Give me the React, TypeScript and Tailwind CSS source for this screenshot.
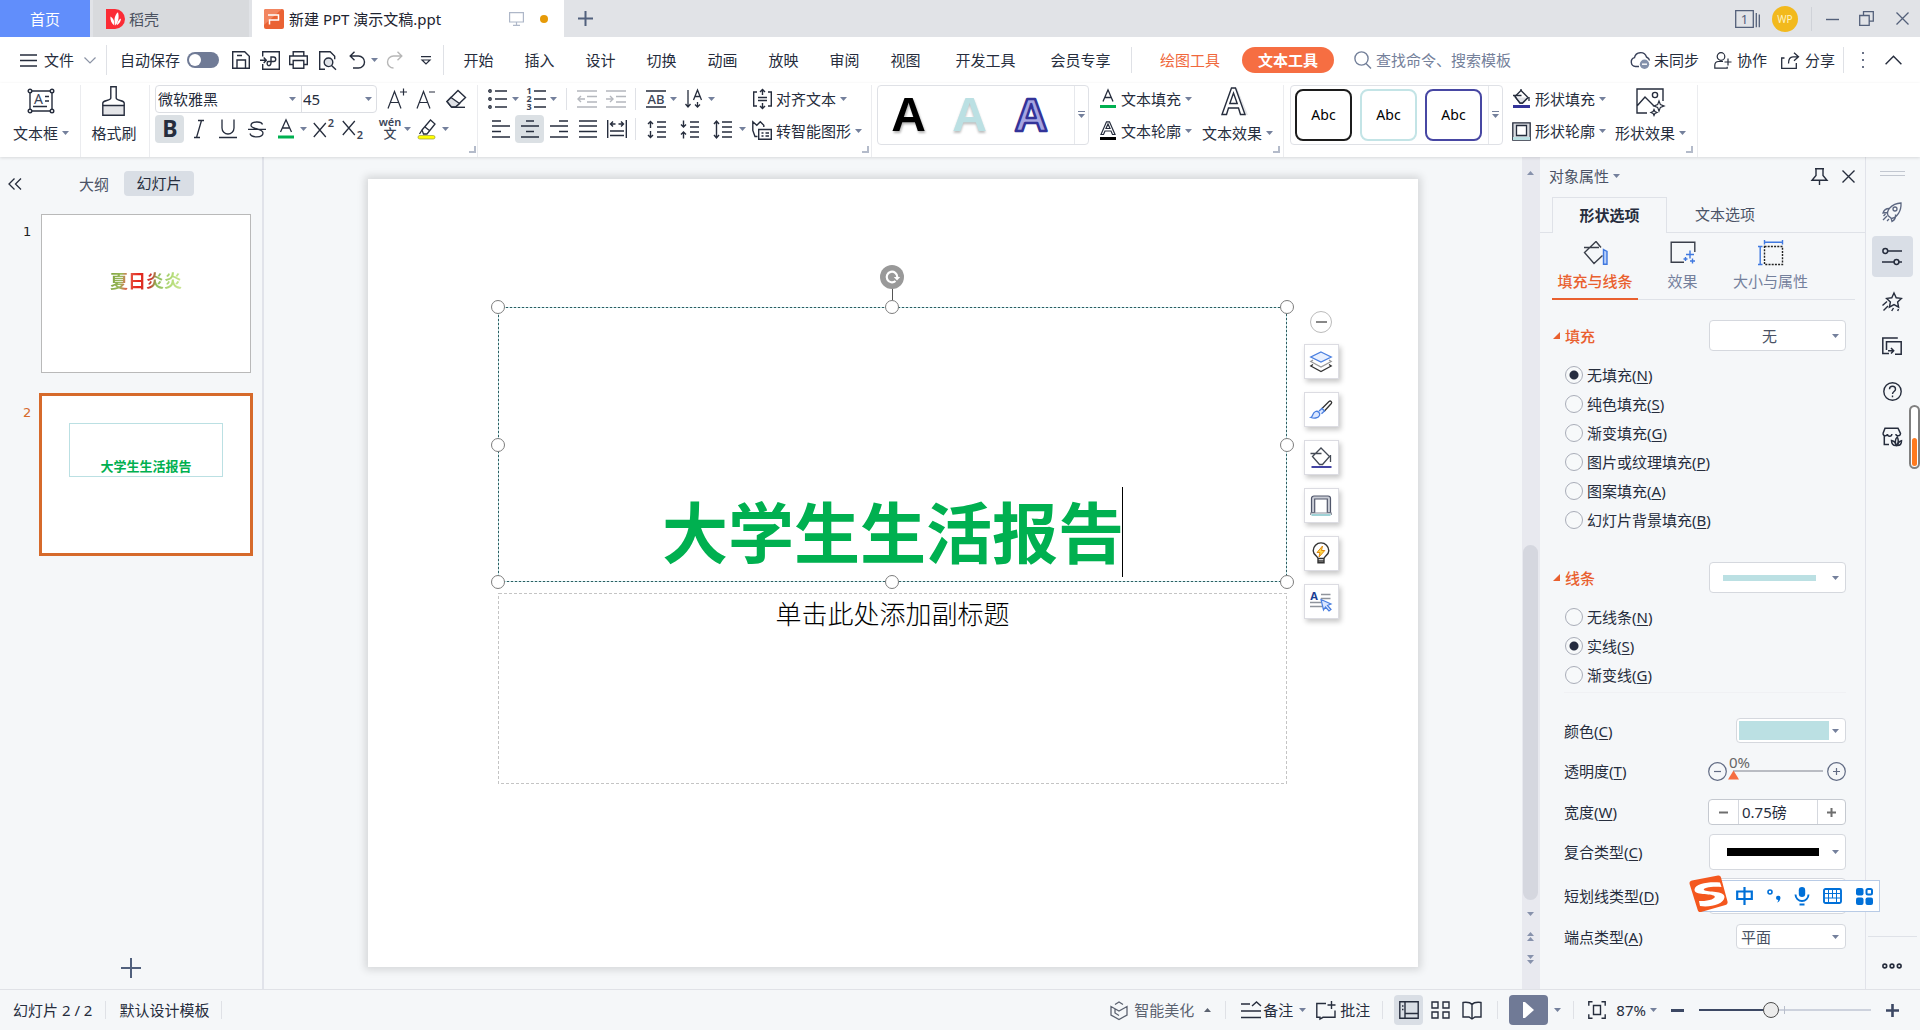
import { useState, type ReactNode } from "react";

const RED = "#e9602f";

function Svg({
  w,
  h,
  sw = 1.4,
  className = "",
  children,
}: {
  w: number;
  h: number;
  sw?: number;
  className?: string;
  children: ReactNode;
}) {
  return (
    <svg
      width={w}
      height={h}
      viewBox={`0 0 ${w} ${h}`}
      fill="none"
      stroke="currentColor"
      strokeWidth={sw}
      className={`shrink-0 overflow-visible ${className}`}
      aria-hidden="true"
    >
      {children}
    </svg>
  );
}

function Caret({ className = "text-[#74809c]" }: { className?: string }) {
  return (
    <svg width="7" height="4" viewBox="0 0 7 4" className={`shrink-0 ${className}`} aria-hidden="true">
      <path d="M0 0h7L3.5 4z" fill="currentColor" />
    </svg>
  );
}

// letter glyph used by the character formatting buttons
function Letter({ x, y, size, weight = 400, fill = "#3b4456", children }: { x: number; y: number; size: number; weight?: number; fill?: string; children: string }) {
  return (
    <text x={x} y={y} fontSize={size} fontWeight={weight} fill={fill} stroke="none" textAnchor="middle" fontFamily="'Noto Sans', 'Noto Sans CJK SC', sans-serif">
      {children}
    </text>
  );
}

function Sep({ className = "h-7" }: { className?: string }) {
  return <div className={`w-px shrink-0 bg-[#dfe1e6] ${className}`} />;
}

function IconBtn({ label, active, caret, wide, children }: { label: string; active?: boolean; caret?: boolean; wide?: boolean; children: ReactNode }) {
  return (
    <button
      aria-label={label}
      className={`flex h-7 shrink-0 items-center ${caret ? (wide ? "w-[42px]" : "w-[38px]") : wide ? "w-[33px]" : "w-[29px]"}`}
    >
      <span className={`flex h-7 items-center justify-center rounded-sm ${wide ? "w-[33px]" : "w-[29px]"} ${active ? "bg-[#dbe0e4]" : ""}`}>
        {children}
      </span>
      {caret && <Caret />}
    </button>
  );
}

function LabelBtn({ icon, text, iconWidth = "w-[18px]" }: { icon: ReactNode; text: string; iconWidth?: string }) {
  return (
    <button className="flex h-7 items-center gap-1 whitespace-nowrap">
      <span className={`flex justify-center ${iconWidth}`}>{icon}</span>
      <span>{text}</span>
      <Caret />
    </button>
  );
}

function BigBtn({ icon, text, caret }: { icon: ReactNode; text: string; caret?: boolean }) {
  return (
    <button className="flex flex-col items-center gap-1 whitespace-nowrap">
      <span className="flex h-8 items-center">{icon}</span>
      <span className="flex items-center gap-1 leading-6">
        {text}
        {caret && <Caret />}
      </span>
    </button>
  );
}

function Corner() {
  return (
    <Svg w={7} h={7} sw={2} className="mt-auto mr-[6px] mb-1 ml-auto text-[#b4bbca]">
      <path d="M6 0v6H0" />
    </Svg>
  );
}

function TitleBar() {
  return (
    <header className="flex h-[37px] shrink-0 bg-[#e1e3e7]">
      <button className="w-[90px] bg-[#618efb] text-white">首页</button>
      <button className="ml-[3px] flex w-[156px] items-center gap-1 bg-[#d8dadd] pl-[13px] text-[#4b5260]">
        <svg width="19" height="20" viewBox="0 0 19 20" aria-hidden="true">
          <path d="M0 0h9a10 10 0 0 1 0 20H0z" fill="#fb2b35" />
          <path d="M9.4 16.5C7.6 11 8.6 6 12 3.3c1.3 4.800.4 9.900-2.600 13.200z" fill="#fff" />
          <path d="M8.300 16.400C5.600 14.700 4.100 11.300 4.400 7.600c3 1.600 4.400 5 3.900 8.800zM10.800 16.300c2.500-1.200 4-3.500 4.200-6.700-2.400 1.200-3.900 3.600-4.200 6.700z" fill="#fff" />
        </svg>
        稻壳
      </button>
      <div className="ml-[3px] flex w-[312px] items-center bg-white pl-3 text-[#1d2330]">
        <svg width="20" height="20" viewBox="0 0 20 20" aria-hidden="true">
          <rect width="20" height="20" rx="2" fill="#ea6234" />
          <path d="M0 2a2 2 0 0 1 2-2h16L0 16z" fill="#f28560" />
          <path d="M4 6h10.500v5H5.500v4.500" fill="none" stroke="#fff" strokeWidth="1.500" />
        </svg>
        <span className="ml-[5px]">新建 PPT 演示文稿.ppt</span>
        <Svg w={15} h={14} sw={1.2} className="ml-auto text-[#aeb7c8]">
          <path d="M.6.6h13.800v9.400H.6zM7.500 10v3M4 13.300h7" />
        </Svg>
        <span className="mr-4 ml-4 size-2 rounded-full bg-[#e69a08]" />
      </div>
      <button aria-label="新建标签" className="ml-[14px] text-[#51607d]">
        <Svg w={15} h={15} sw={2}>
          <path d="M7.500 0v15M0 7.500h15" />
        </Svg>
      </button>
      <div className="ml-auto flex items-center pr-[11px] text-[#53607a]">
        <Svg w={25} h={18} sw={1.300}>
          <path d="M.7.7h17.600v16.600H.7zM21.300 3v14.300M24.300 4.500v12.800" />
          <Letter x={9.500} y={14} size={13} fill="#53607a">1</Letter>
        </Svg>
        <span className="ml-3 flex size-[26px] items-center justify-center rounded-full bg-[#f2b91d] text-[10px] text-[#fff3c4]">WP</span>
        <Sep className="ml-[13px] h-6 !bg-[#cfd2d8]" />
        <button aria-label="最小化" className="ml-[14px]">
          <Svg w={13} h={14}><path d="M0 7.500h13" /></Svg>
        </button>
        <button aria-label="还原" className="ml-5">
          <Svg w={15} h={15} sw={1.300}><path d="M.7 4.500h9.500v9.800H.7zM4.500 4.500V.7h9.800v9.500h-4" /></Svg>
        </button>
        <button aria-label="关闭" className="ml-[22px]">
          <Svg w={13} h={13} sw={1.300}><path d="M.5.5l12 12M12.500.5l-12 12" /></Svg>
        </button>
      </div>
    </header>
  );
}

const TABS = ["开始", "插入", "设计", "切换", "动画", "放映", "审阅", "视图"];

function MenuBar() {
  const [autoSave, setAutoSave] = useState(false);
  return (
    <nav className="flex h-[46px] shrink-0 items-center bg-white whitespace-nowrap">
      <button className="ml-5 flex items-center">
        <Svg w={17} h={13} sw={1.300}><path d="M0 1h17M0 6.500h17M0 12h17" /></Svg>
        <span className="ml-[7px]">文件</span>
        <Svg w={12} h={7} sw={1.200} className="ml-[10px] text-[#8b93a5]"><path d="M.5.5L6 6l5.500-5.500" /></Svg>
      </button>
      <Sep className="ml-[10px] h-[30px]" />
      <label className="ml-[13px] flex items-center gap-[7px]">
        自动保存
        <input type="checkbox" role="switch" className="peer sr-only" checked={autoSave} onChange={(e) => setAutoSave(e.target.checked)} />
        <span className="flex h-4 w-8 items-center rounded-full bg-[#707b96] px-0.5 peer-checked:justify-end">
          <span className="size-3 rounded-full bg-white" />
        </span>
      </label>
      <div className="ml-[7px] flex">
        <IconBtn label="保存">
          <Svg w={18} h={18}><path d="M.7.7h12l4.600 4.600v12H.7zM5 17v-8h8.500v8M5 4.500h5" /></Svg>
        </IconBtn>
        <IconBtn label="输出为PDF">
          <Svg w={20} h={19}><path d="M2.700 5.500V.7h16.600v17.600H2.700V13M0 9.200h6M3.700 6.500l2.600 2.700-2.600 2.700M8 14.500c2 .6 3-1 3-3V6h2.500c3 0 3 4.500 0 4.500H8.500c-2 0-1.500 3-.5 4" /></Svg>
        </IconBtn>
        <IconBtn label="打印">
          <Svg w={19} h={18}><path d="M4.200 5V.7h10.600V5M4 13.500H.7V5h17.600v8.500H15M4.200 9.500h10.600v7.800H4.200z" /></Svg>
        </IconBtn>
        <IconBtn label="打印预览">
          <Svg w={17} h={19}><path d="M6 18.200H.7V.7h10.500l4.500 4.500v3M12.500 14.500l4.500 4.200" /><circle cx="9.500" cy="11.300" r="4.300" fill="#e1e4e9" /></Svg>
        </IconBtn>
        <IconBtn label="撤销" caret>
          <Svg w={16} h={18}><path d="M5.500.8L1.200 5l4.300 4.200M1.200 5h8.300a5.700 5.700 0 0 1 0 12H4" /></Svg>
        </IconBtn>
        <IconBtn label="恢复">
          <Svg w={16} h={18} className="text-[#b7b7b7]"><path d="M10.500.8L14.800 5l-4.300 4.200M14.800 5H6.500a5.700 5.700 0 0 0 0 12" /></Svg>
        </IconBtn>
        <button aria-label="更多" className="ml-[12px] self-center">
          <Svg w={10} h={9} sw={1.200}><path d="M0 .7h10M1 4h8L5 8z" /></Svg>
        </button>
      </div>
      <Sep className="ml-3 h-[30px]" />
      <div className="ml-1 flex">
        {TABS.map((t) => (
          <button key={t} className="w-[61px] text-center">{t}</button>
        ))}
        <button className="ml-[19px] w-[61px]">开发工具</button>
        <button className="ml-[34px] w-[61px]">会员专享</button>
      </div>
      <Sep className="ml-5 h-[26px]" />
      <button className="ml-[28px] text-[#f0683c]">绘图工具</button>
      <button className="ml-[22px] h-[26px] w-[92px] rounded-full bg-[#f66e42] font-bold text-white">文本工具</button>
      <label className="ml-5 flex min-w-0 items-center gap-1 text-[#74809a]">
        <Svg w={18} h={18}><circle cx="7.500" cy="7.500" r="6.600" /><path d="M12 12.500l5 5" /></Svg>
        <input aria-label="查找命令" placeholder="查找命令、搜索模板" className="w-40 outline-none placeholder:text-[#74809a]" />
      </label>
      <div className="ml-auto flex items-center pr-[18px]">
        <button className="flex items-center gap-[3px]">
          <Svg w={21} h={18} className="text-[#39415a]">
            <path d="M9 15.500H5.500a4.500 4.500 0 0 1-1-8.800A6.200 6.200 0 0 1 16.500 6c1.700.7 2.800 2 3 3.500" />
            <circle cx="14.500" cy="13.200" r="4.700" fill="#8390aa" stroke="none" />
            <path d="M12 13.200h5" stroke="#fff" />
          </Svg>
          未同步
        </button>
        <button className="ml-[15px] flex items-center gap-[5px]">
          <Svg w={18} h={17} sw={1.200}><circle cx="7" cy="4.500" r="3.800" /><path d="M9 9.500H4.500A3.800 3.800 0 0 0 .8 13v3.200h12.400v-1.500M14 6.500v7M10.500 10h7" /></Svg>
          协作
        </button>
        <button className="ml-[14px] flex items-center gap-[5px]">
          <Svg w={19} h={17} sw={1.300}><path d="M3.500 6H.7v10.300h14.600V11M13 .8l4.500 4-4.500 4M17 4.800h-5c-3 0-4.500 2-4.500 6.700" /></Svg>
          分享
        </button>
        <Sep className="ml-2 h-[26px]" />
        <button aria-label="更多选项" className="ml-[18px] text-[#6a7287]">
          <svg width="3" height="16" viewBox="0 0 3 16" fill="currentColor"><path d="M0 0h2v2H0zM0 7h2v2H0zM0 14h2v2H0z" /></svg>
        </button>
        <button aria-label="收起功能区" className="ml-5">
          <Svg w={17} h={10}><path d="M.6 9.300l7.900-8 7.900 8" /></Svg>
        </button>
      </div>
    </nav>
  );
}

function lines(rows: [number, number, number][]) {
  return rows.map(([x1, x2, y]) => `M${x1} ${y}H${x2}`).join("");
}

function GalleryDrop() {
  return (
    <button aria-label="展开样式" className="ml-auto flex w-[14px] items-center justify-center self-stretch border-l border-[#e6e8ec] text-[#74809c]">
      <Svg w={7} h={8} sw={1}><path d="M0 .5h7" /><path d="M0 3h7L3.500 7z" fill="currentColor" stroke="none" /></Svg>
    </button>
  );
}

function Ribbon() {
  return (
    <div className="z-10 flex h-[74px] shrink-0 bg-white pt-0.5 whitespace-nowrap shadow-[0_1px_3px_rgba(0,0,0,0.12)]">
      <div className="flex w-[81px] justify-center border-r border-[#ebecef] pl-0.5">
        <BigBtn
          caret
          text="文本框"
          icon={
            <Svg w={28} h={26}>
              <path d="M3 3h22v20H3z" />
              <path d="M6 18.500h14M18 8.500h4M18 13h4" />
              <g fill="#fff"><circle cx="3" cy="3" r="1.800" /><circle cx="25" cy="3" r="1.800" /><circle cx="3" cy="23" r="1.800" /><circle cx="25" cy="23" r="1.800" /></g>
              <Letter x={11.500} y={15.500} size={14}>A</Letter>
            </Svg>
          }
        />
      </div>
      <div className="flex w-[68px] justify-center pr-0.5">
        <BigBtn
          text="格式刷"
          icon={
            <Svg w={23} h={30}>
              <path d="M.8 19.500h21.400v9.700H.8z" fill="#e4e5e8" />
              <path d="M.8 19.500V17c0-3 8-2 8-5V.8h5.400V12c0 3 8 2 8 5v2.500" />
            </Svg>
          }
        />
      </div>
      <div className="flex w-[329px] border-x border-[#ebecef] pl-[5px]">
        <div className="flex shrink-0 flex-col gap-0.5">
          <div className="flex h-7 items-center">
            <div className="flex h-7 w-[222px] rounded-sm border border-[#dcdee3]">
              <div className="relative flex w-[146px] items-center border-r border-[#dcdee3]">
                <select aria-label="字体" className="w-full appearance-none bg-transparent pl-0.5 outline-none"><option>微软雅黑</option></select>
                <Caret className="pointer-events-none absolute right-[5px] text-[#74809c]" />
              </div>
              <div className="relative flex flex-1 items-center">
                <select aria-label="字号" className="w-full appearance-none bg-transparent pl-px outline-none"><option>45</option></select>
                <Caret className="pointer-events-none absolute right-1 text-[#74809c]" />
              </div>
            </div>
            <div className="ml-[5px] flex">
              <IconBtn label="增大字号">
                <Svg w={22} h={22} sw={1.200}><path d="M2 20.500L8.500 3.500l6.500 17M4.200 14.500h8.600M14 4h7M17.500.5v7" /></Svg>
              </IconBtn>
              <IconBtn label="减小字号">
                <Svg w={22} h={22} sw={1.200}><path d="M2 20.500L8.500 3.500l6.500 17M4.200 14.500h8.600M14 4h6" /></Svg>
              </IconBtn>
              <IconBtn label="清除格式">
                <Svg w={21} h={20} className="ml-1"><path d="M1 12.500L12 1.500l7.500 7-10 9.500H5.500z" /><path d="M5 8.500l8.500 6-4 3.500H5.500L1 12.500z" fill="#dfe1e6" /><path d="M6 18.300h13" /></Svg>
              </IconBtn>
            </div>
          </div>
          <div className="flex h-7 items-center">
            <IconBtn label="加粗" active>
              <Svg w={20} h={22}><Letter x={10} y={19} size={23} weight={700} fill="#262d3d">B</Letter></Svg>
            </IconBtn>
            <IconBtn label="倾斜"><Svg w={12} h={20} sw={1.300}><path d="M5 1.500h6M1 18.500h6M8.500 1.500l-5 17" /></Svg></IconBtn>
            <IconBtn label="下划线"><Svg w={20} h={20} sw={1.300}><path d="M4 .5v8.500a6 6 0 0 0 12 0V.5M1 18.500h18" /></Svg></IconBtn>
            <IconBtn label="删除线"><Svg w={18} h={17} sw={1.300}><path d="M14.500 3.500C13.500 0 3 0 3 4.500 3 8 15 7.500 15 12c0 5-12 5-13 .5M0 8.300h18" /></Svg></IconBtn>
            <IconBtn label="字体颜色" caret>
              <Svg w={18} h={20} sw={1.300}><path d="M3.500 13L9 .8 14.500 13M5.500 9h7" /><path d="M1 18h16" stroke="#00b050" strokeWidth={3} /></Svg>
            </IconBtn>
            <div className="mr-2 flex">
              <IconBtn label="上标"><Svg w={22} h={20} sw={1.300}><path d="M.8 4l12 14M12.800 4l-12 14" /><Letter x={18} y={8} size={11} weight={600}>2</Letter></Svg></IconBtn>
              <IconBtn label="下标"><Svg w={22} h={20} sw={1.300}><path d="M.8 2l12 14M12.800 2l-12 14" /><Letter x={18} y={20} size={11} weight={600}>2</Letter></Svg></IconBtn>
            </div>
            <IconBtn label="拼音指南" caret>
              <Svg w={22} h={22}><Letter x={11} y={8} size={11} weight={600}>wén</Letter><Letter x={11} y={20} size={13} weight={500}>文</Letter></Svg>
            </IconBtn>
            <IconBtn label="突出显示" caret>
              <Svg w={21} h={21} sw={1.300}><path d="M5 11L13.500 1l4.500 4-8 10H6.500zM5 11L2.500 15M8 8l5 4" /><rect x="1" y="16.500" width="17" height="3.500" rx="1.700" fill="#ff0" stroke="#9a9a40" strokeWidth=".7" /></Svg>
            </IconBtn>
          </div>
        </div>
        <Corner />
      </div>

      <div className="flex w-[394px] border-r border-[#ebecef]">
        <div className="flex w-[274px] shrink-0 flex-col gap-0.5 pl-[5px]">
          <div className="flex h-7 items-center">
            <IconBtn label="项目符号" caret>
              <Svg w={19} h={20}><path d={lines([[7, 19, 2], [7, 19, 10], [7, 19, 18]])} /><circle cx="2" cy="2" r="1.200" /><circle cx="2" cy="10" r="1.200" /><circle cx="2" cy="18" r="1.200" /></Svg>
            </IconBtn>
            <IconBtn label="编号" caret>
              <Svg w={20} h={22}><path d={lines([[8, 20, 3], [8, 20, 11], [8, 20, 19]])} /><Letter x={3} y={6} size={9} weight={700}>1</Letter><Letter x={3} y={14} size={9} weight={700}>2</Letter><Letter x={3} y={22} size={9} weight={700}>3</Letter></Svg>
            </IconBtn>
            <Sep className="ml-[7px] mr-[5px] h-[22px]" />
            <IconBtn label="减少缩进"><Svg w={20} h={18} className="text-[#b4b7bd]"><path d={lines([[0, 20, 1], [10, 20, 6.500], [10, 20, 12], [0, 20, 17], [1, 8, 9]])} /><path d="M4 6L1 9l3 3" /></Svg></IconBtn>
            <IconBtn label="增加缩进"><Svg w={20} h={18} className="text-[#b4b7bd]"><path d={lines([[0, 20, 1], [10, 20, 6.500], [10, 20, 12], [0, 20, 17], [0, 7, 9]])} /><path d="M4 6l3 3-3 3" /></Svg></IconBtn>
            <Sep className="mx-[5px] h-[22px]" />
            <IconBtn label="上划线" caret>
              <Svg w={20} h={18}><path d="M0 1h20M0 17h20" /><Letter x={10} y={13.500} size={13} weight={500}>AB</Letter></Svg>
            </IconBtn>
            <IconBtn label="文字方向" caret>
              <Svg w={18} h={20} sw={1.300}><path d="M3 1v17M.5 15L3 18l2.500-3M12.500 13v5M10 15.500l2.500 2.500 2.500-2.500M8.500 11L12.500 1l4 10M10 7.500h5" /></Svg>
            </IconBtn>
          </div>
          <div className="ml-[3px] flex h-7 items-center">
            <IconBtn label="左对齐"><Svg w={18} h={18}><path d={lines([[0, 9, 1], [0, 18, 6], [0, 9, 11.500], [0, 18, 17]])} /></Svg></IconBtn>
            <IconBtn label="居中" active><Svg w={18} h={18}><path d={lines([[5, 13, 1], [0, 18, 6], [5, 13, 11.500], [0, 18, 17]])} /></Svg></IconBtn>
            <IconBtn label="右对齐"><Svg w={18} h={18}><path d={lines([[9, 18, 1], [0, 18, 6], [9, 18, 11.500], [0, 18, 17]])} /></Svg></IconBtn>
            <IconBtn label="两端对齐"><Svg w={18} h={18}><path d={lines([[0, 18, 1], [0, 18, 6], [0, 18, 11.500], [0, 18, 17]])} /></Svg></IconBtn>
            <IconBtn label="分散对齐"><Svg w={20} h={18}><path d="M.7 0v18M19.300 0v18M3.500 4h5M11.500 4h5M6 1.500L3.500 4 6 6.500M14 1.500L16.500 4 14 6.500M3 11h14M3 15.500h14" /></Svg></IconBtn>
            <Sep className="mx-1 h-[22px]" />
            <IconBtn label="增加段落间距" wide><Svg w={19} h={19}><path d={lines([[10, 19, 2], [10, 19, 7], [10, 19, 12], [10, 19, 17]])} /><path d="M3.500 8V1.500M1 4l2.500-2.500L6 4M3.500 11v6.500M1 15l2.500 2.500L6 15" /></Svg></IconBtn>
            <IconBtn label="减少段落间距" wide><Svg w={19} h={19}><path d={lines([[10, 19, 2], [10, 19, 7], [10, 19, 12], [10, 19, 17]])} /><path d="M3.500.5V7M1 4.500L3.500 7 6 4.500M3.500 18.500V12M1 14.500L3.500 12 6 14.500" /></Svg></IconBtn>
            <IconBtn label="行距" wide caret><Svg w={19} h={19}><path d={lines([[9, 19, 2], [9, 19, 7], [9, 19, 12], [9, 19, 17]])} /><path d="M3.500 1v17M1 4l2.500-3L6 4M1 15l2.500 3L6 15" /></Svg></IconBtn>
          </div>
        </div>
        <div className="flex shrink-0 flex-col gap-1">
          <LabelBtn
            iconWidth="w-5"
            text="对齐文本"
            icon={<Svg w={19} h={20}><path d="M4 3H.7v14H4M15 3h3.300v14H15M9.500 0v6M7 3l2.500-2.500L12 3M9.500 20v-6M7 17l2.500 2.500L12 17M5 8.500h9M5 11.500h9" /></Svg>}
          />
          <LabelBtn
            iconWidth="w-5"
            text="转智能图形"
            icon={<Svg w={20} h={19} className="-translate-y-px"><path d="M5.500 15.500H3L.8 9.500V.8l4 3.500 3.500-3.500 3.500 3.500V6M6.700 8.500h12.600v9.800H6.700zM9.500 12h2M13.500 12h3.500M9.500 15h2M13.500 15h3.500" /></Svg>}
          />
        </div>
        <Corner />
      </div>

      <div className="flex w-[412px] border-r border-[#ebecef] pl-[5px]">
        <div className="flex h-[60px] w-[212px] shrink-0 items-center rounded-sm border border-[#dfe1e6] font-[Liberation_Sans] text-5xl font-bold">
          <button aria-label="填充 黑色" className="w-[61px] text-center text-black drop-shadow-[1px_2px_1px_rgba(0,0,0,0.3)]">A</button>
          <button aria-label="填充 浅青" className="w-[61px] text-center text-[#bbe0e3] drop-shadow-[0_2px_1px_rgba(0,0,0,0.25)]">A</button>
          <button aria-label="填充 蓝紫 轮廓" className="flex w-[61px] justify-center text-[#a5a5e2]">
            <svg width="40" height="44" viewBox="0 0 40 44" className="overflow-visible" aria-hidden="true">
              <text x="20" y="38" textAnchor="middle" fontSize="46" fill="currentColor" stroke="#333399" strokeWidth="2.500" strokeLinejoin="round" fontFamily="'Liberation Sans', sans-serif">A</text>
            </svg>
          </button>
          <GalleryDrop />
        </div>
        <div className="ml-[10px] flex shrink-0 flex-col gap-1">
          <LabelBtn text="文本填充" icon={<Svg w={18} h={20} sw={1.300}><path d="M4 12.500L9 .8l5 11.700M5.700 8.500h6.600" /><path d="M1 17.500h16" stroke="#00b050" strokeWidth={3} /></Svg>} />
          <LabelBtn text="文本轮廓" icon={<Svg w={18} h={20} sw={1.200}><path d="M2 13.500L7.500.8h3L16 13.500h-2.500L12 10H6l-1.500 3.500zM7 7.500h4L9 3z" /><path d="M1 17.500h16" stroke="#000" strokeWidth={3} /></Svg>} />
        </div>
        <div className="ml-[10px] shrink-0">
          <BigBtn
            caret
            text="文本效果"
            icon={
              <Svg w={34} h={29}>
                <path d="M16 1l11 27h-6L13 6z" fill="#e4e5e8" stroke="none" />
                <path d="M1 27.500L10.500 1h4L24 27.500h-4.500L17.500 21h-10l-2 6.500zM8.800 16.500h7.400L12.500 6z" fill="#fff" />
              </Svg>
            }
          />
        </div>
        <Corner />
      </div>

      <div className="flex w-[414px] border-r border-[#ebecef] pl-[6px]">
        <div className="flex h-[60px] w-[213px] shrink-0 items-center rounded-sm border border-[#dfe1e6] text-sm text-black">
          <div className="flex flex-1 gap-2 pl-1">
            <button className="h-[52px] w-[57px] rounded-lg border-2 border-[#1c1c1c]">Abc</button>
            <button className="h-[52px] w-[57px] rounded-lg border-2 border-[#c3e4e6]">Abc</button>
            <button className="h-[52px] w-[57px] rounded-lg border-2 border-[#4747a3]">Abc</button>
          </div>
          <GalleryDrop />
        </div>
        <div className="ml-[9px] flex shrink-0 flex-col gap-1">
          <LabelBtn iconWidth="w-[19px]" text="形状填充" icon={<Svg w={19} h={20} sw={1.300}><path d="M3 7.500L9 1.500l7 7-5.500 5.500H8z" fill="#fff" /><path d="M4 8.500h12L10.500 14H8z" fill="#dfe1e6" stroke="none" /><path d="M1 6.500h8.500M9 0v2M17 8v4M3 7.500L8 14h2.500l5.500-5.500" /><path d="M1 17.500h17" stroke="#333399" strokeWidth={3} /></Svg>} />
          <LabelBtn iconWidth="w-[19px]" text="形状轮廓" icon={<Svg w={19} h={19} sw={1.300}><path d="M.8.8h17.400v17.400H.8z" fill="#d9dbe0" /><path d="M4.500 3.500h10v10h-10z" fill="#fff" /><path d="M1 16.500h17" stroke="#bbe0e3" strokeWidth={3} /></Svg>} />
        </div>
        <div className="ml-[9px] shrink-0">
          <BigBtn
            caret
            text="形状效果"
            icon={
              <Svg w={29} h={27}>
                <path d="M11 25H1V1h26v12M1 18l8-9 9 9" />
                <circle cx="19" cy="7" r="2.600" />
                <path d="M23 13l1.400 3.600L28 18l-3.600 1.400L23 23l-1.400-3.600L18 18l3.600-1.400zM18 21.500l.9 2.100 2.100.9-2.100.9-.9 2.100-.9-2.100-2.100-.9 2.100-.9z" fill="#fff" strokeWidth={1.200} />
              </Svg>
            }
          />
        </div>
        <Corner />
      </div>
    </div>
  );
}

function SlidePanel() {
  return (
    <aside className="flex w-[264px] shrink-0 flex-col border-r-2 border-[#e1e3ea]">
      <div className="flex items-center pt-[14px]">
        <button aria-label="收起" className="ml-2">
          <Svg w={14} h={12} sw={1.300}><path d="M6.500.5L1 6l5.500 5.500M13 .5L7.500 6l5.500 5.500" /></Svg>
        </button>
        <button className="ml-[57px] w-[30px] text-[#4b5366]">大纲</button>
        <button className="ml-[15px] h-[25px] w-[70px] rounded-sm bg-[#d9dee5] leading-[25px]">幻灯片</button>
      </div>
      <ol className="mt-4 flex flex-1 flex-col gap-[18px] font-['DejaVu_Sans',sans-serif] text-[13px] font-medium">
        <li className="flex">
          <span className="w-[39px] pt-[10px] pl-[23px] text-[#222]">1</span>
          <button aria-label="幻灯片 1" className="h-[163px] w-[214px] p-0.5">
            <span className="flex h-full justify-center border border-[#b9b9b9] bg-white pt-[53px]">
              <span className="bg-[linear-gradient(180deg,transparent_62%,#1a140c_74%),linear-gradient(100deg,#7ba03a_0%,#9ab85a_14%,#e0604c_22%,#e8261c_34%,#c83a30_48%,#8dbb5a_54%,#b8de7c_72%,#cfe79a_86%,#f2675a_100%)] bg-[length:50%_100%,100%_100%] bg-clip-text bg-no-repeat font-['Noto_Sans_CJK_SC',sans-serif] text-lg leading-6 font-bold text-transparent">
                夏日炎炎
              </span>
            </span>
          </button>
        </li>
        <li className="flex">
          <span className="w-[39px] pt-[10px] pl-[23px] text-[#d66a2b]">2</span>
          <button aria-label="幻灯片 2" className="flex h-[163px] w-[214px] justify-center border-3 border-[#d66a2b] bg-white pt-[27px]">
            <span className="flex h-[54px] w-[154px] items-end justify-center border border-[#bbe0e3] font-['Noto_Sans_CJK_SC',sans-serif] leading-5 font-bold text-[#00b050]">
              大学生生活报告
            </span>
          </button>
        </li>
      </ol>
      <button aria-label="新建幻灯片" className="mb-[11px] ml-[121px] w-5 text-[#51607d]">
        <Svg w={20} h={20} sw={2}><path d="M10 0v20M0 10h20" /></Svg>
      </button>
    </aside>
  );
}

const HANDLES = [
  "left-0 top-0",
  "left-1/2 top-0",
  "left-full top-0",
  "left-0 top-1/2",
  "left-full top-1/2",
  "left-0 top-full",
  "left-1/2 top-full",
  "left-full top-full",
];

const QUICK_TOOLS: { label: string; icon: ReactNode }[] = [
  {
    label: "叠放次序",
    icon: (
      <Svg w={22} h={21} sw={1.300}>
        <path d="M3 13.500L.8 15 11 20.500 21.200 15 19 13.500" stroke="#333" />
        <path d="M3 9L.8 10.500 11 16l10.200-5.500L19 9" stroke="#999" />
        <path d="M11 1l10.200 5L11 11 .8 6z" fill="#e8f0ff" stroke="#4a7fe0" />
      </Svg>
    ),
  },
  {
    label: "快速样式",
    icon: (
      <Svg w={23} h={20} sw={1.300}>
        <path d="M11.500 9L19 1.500c1.500-1.200 3.500.5 2.300 2L14 11.500" stroke="#333" />
        <path d="M1 17.500c2-.5 1-4.500 4.500-6 2.500-1 5 1.500 4 4-1.500 3-6 3-8.500 2zM9 11l3-2.500 2.500 2.500-3 2.800" fill="#dbe7ff" stroke="#4a7fe0" />
      </Svg>
    ),
  },
  {
    label: "填充",
    icon: (
      <Svg w={22} h={21} sw={1.300}>
        <path d="M2.500 9.500L11 1l8.500 8.500L12.500 17.500h-3zM.5 6.500h11M20.500 8v7" stroke="#444a55" />
        <path d="M1.500 20h20" stroke="#2e2e99" strokeWidth={1.800} />
      </Svg>
    ),
  },
  {
    label: "轮廓",
    icon: (
      <Svg w={22} h={21} sw={1.200}>
        <path d="M1.500 17.500V3.500A2.500 2.500 0 0 1 4 1h14a2.500 2.500 0 0 1 2.500 2.500v14h-3.200V4H4.700v13.500z" stroke="#50566a" fill="#c9ccd5" />
        <path d="M.7 20v-2h20.600v2" stroke="#8a8f9c" />
        <path d="M1.500 20h19" stroke="#9fd2d6" strokeWidth={2} />
      </Svg>
    ),
  },
  {
    label: "智能推荐",
    icon: (
      <Svg w={18} h={21} sw={1.400}>
        <path d="M6 15.500c0-2-4.800-3.500-4.800-7.800a7.800 7.800 0 0 1 15.600 0c0 4.300-4.800 5.800-4.800 7.800zM6 16v3.800h6V16M6 18h6" stroke="#333" />
        <path d="M10.500 3L5 9.500h3L7 14l5.800-6.500H9.500z" fill="#ffd94a" stroke="#e08a10" strokeWidth={1} />
      </Svg>
    ),
  },
  {
    label: "文本工具",
    icon: (
      <Svg w={22} h={21} sw={1.500}>
        <path d="M11 3.500h9.500M11 7.500h9.500M0 11.500h11M0 15.500h12" stroke="#8f949c" />
        <Letter x={4} y={9} size={11} weight={700} fill="#1c3f94">A</Letter>
        <path d="M11 8.500l10 4.500-3.500 1.500 3.500 4-2 1.500-3.500-4-2 3z" fill="#dbe7ff" stroke="#4a7fe0" strokeWidth={1.200} />
      </Svg>
    ),
  },
];

function Canvas() {
  return (
    <main className="flex min-w-0 flex-1 items-center justify-center py-[22px]">
      <div className="relative aspect-[1050/788] h-full bg-white shadow-[0_0_8px_3px_rgba(0,0,0,0.13)]">
        <section className="absolute top-[16.3%] left-[12.4%] flex h-[34.8%] w-[75.1%] items-end justify-center pb-[5px]">
          <svg className="absolute inset-0 size-full overflow-visible" aria-hidden="true">
            <rect width="100%" height="100%" fill="none" stroke="#bbe0e3" shapeRendering="crispEdges" />
            <rect width="100%" height="100%" fill="none" stroke="#2f5c60" strokeDasharray="2 2" shapeRendering="crispEdges" />
          </svg>
          <h1 className="pb-1 font-['Noto_Sans_CJK_SC',sans-serif] text-[66px] leading-[88px] font-bold text-[#00b050]">大学生生活报告</h1>
          <span className="-ml-0.5 h-[90px] w-px bg-black" />
          <span className="absolute -top-[19px] left-1/2 h-3 w-px bg-[#555]" />
          <button aria-label="旋转" className="absolute -top-[42px] left-1/2 flex size-6 -translate-x-1/2 items-center justify-center rounded-full bg-[#999] text-white">
            <Svg w={16} h={16} sw={2.200}>
              <path d="M11.500 12a5.300 5.300 0 1 1 1.800-4" />
              <path d="M9.800 8h6.400L13 11.500z" fill="currentColor" stroke="none" />
            </Svg>
          </button>
          {HANDLES.map((pos) => (
            <span key={pos} className={`absolute size-[14px] -translate-1/2 rounded-full border border-[#7d7d7d] bg-white ${pos}`} />
          ))}
        </section>
        <section className="absolute top-[52.5%] left-[12.4%] h-[24.2%] w-[75.1%] text-center">
          <svg className="absolute inset-0 size-full overflow-visible" aria-hidden="true">
            <rect width="100%" height="100%" rx="1" fill="none" stroke="#c4c4c4" strokeDasharray="3 2" shapeRendering="crispEdges" />
          </svg>
          <p className="font-['Noto_Sans_CJK_SC',sans-serif] text-[26px] leading-10 font-light text-black">单击此处添加副标题</p>
        </section>
        <div className="absolute top-[16.8%] left-[89.1%] flex flex-col items-center gap-[13px]">
          <button aria-label="收起工具" className="-mb-0.5 flex size-[22px] items-center justify-center rounded-full border border-[#bbb] bg-white">
            <span className="h-0.5 w-[11px] bg-[#888]" />
          </button>
          {QUICK_TOOLS.map((t) => (
            <button key={t.label} aria-label={t.label} className="flex size-[35px] items-center justify-center border border-[#dcdce2] bg-white shadow-[2px_3px_5px_rgba(0,0,0,0.22)]">
              {t.icon}
            </button>
          ))}
        </div>
      </div>
    </main>
  );
}

function ScrollBar() {
  return (
    <div className="flex w-[18px] shrink-0 flex-col items-center bg-[#e8e9ef] pt-[14px] pr-px pb-[25px] text-[#8792ac]">
      <Caret className="rotate-180" />
      <div className="flex flex-1 flex-col justify-end self-stretch px-px pb-3">
        <div className="h-[49%] rounded-lg bg-[#d5d7df]" />
      </div>
      <Caret className="" />
      <svg width="7" height="9" viewBox="0 0 7 9" fill="currentColor" className="mt-4"><path d="M3.500 0L7 4H0zM3.500 5L7 9H0z" /></svg>
      <svg width="7" height="9" viewBox="0 0 7 9" fill="currentColor" className="mt-[14px]"><path d="M0 0h7L3.500 4zM0 5h7L3.500 9z" /></svg>
    </div>
  );
}

function RadioList({ name, value, items }: { name: string; value: string; items: [string, string][] }) {
  const [picked, setPicked] = useState(value);
  return (
    <div className="mt-[9px] ml-px flex flex-col" role="radiogroup">
      {items.map(([text, key]) => (
        <label key={text} className="flex h-[29px] items-center gap-1 self-start">
          <input
            type="radio"
            name={name}
            checked={picked === text}
            onChange={() => setPicked(text)}
            className="size-[18px] appearance-none rounded-full border border-[#a9adb8] bg-[#f7f9fa] checked:bg-[radial-gradient(circle,#262d40_0_4px,transparent_5px)]"
          />
          <span>
            {text}(<u className="underline-offset-2">{key}</u>)
          </span>
        </label>
      ))}
    </div>
  );
}

function PropLabel({ id, text, hot }: { id: string; text: string; hot: string }) {
  return (
    <label htmlFor={id} className="mr-auto">
      {text}(<u className="underline-offset-2">{hot}</u>)
    </label>
  );
}

function Drop({ id, label, className, value = "", center, children }: { id?: string; label?: string; className: string; value?: string; center?: boolean; children?: ReactNode }) {
  return (
    <div className={`relative flex items-center rounded-sm border border-[#d5d8de] bg-white ${className}`}>
      {children}
      <select id={id} aria-label={label} className={`absolute inset-0 size-full appearance-none text-[#4a5264] outline-none ${center ? "pr-4 text-center" : "pl-1"}`}>
        <option>{value}</option>
      </select>
      <Caret className="pointer-events-none absolute right-[6px] text-[#74809c]" />
    </div>
  );
}

function SectionTitle({ text }: { text: string }) {
  return (
    <h3 className="-ml-[11px] flex items-center gap-[5px] font-medium text-[#e9602f]">
      <svg width="7" height="7" viewBox="0 0 7 7" aria-hidden="true"><path d="M7 0v7H0z" fill={RED} /></svg>
      {text}
    </h3>
  );
}

function PropertyPanel() {
  return (
    <section className="flex w-[326px] shrink-0 flex-col border-r border-[#e1e3ea]">
      <div className="flex h-10 items-center pr-[10px] pb-0.5 pl-[9px]">
        <button className="flex items-center gap-1 text-[#4b5366]">
          对象属性 <Caret />
        </button>
        <button aria-label="固定" className="ml-auto">
          <Svg w={17} h={17}><path d="M4 .7h9M5 1v6.500L1 12.300h15L12 7.500V1M8.500 12.300V17" /></Svg>
        </button>
        <button aria-label="关闭窗格" className="ml-[14px]">
          <Svg w={13} h={13}><path d="M.5.5l12 12M12.500.5l-12 12" /></Svg>
        </button>
      </div>
      <div className="flex h-9" role="tablist">
        <span className="w-3 border-b border-[#dfe2e8]" />
        <button role="tab" aria-selected="true" className="w-[115px] border border-b-0 border-[#dfe2e8] pb-0.5 font-bold">形状选项</button>
        <button role="tab" aria-selected="false" className="flex-1 border-b border-[#dfe2e8] pb-px pl-7 text-left text-[#4b5366]">文本选项</button>
      </div>
      <div className="mr-[10px] ml-3 flex h-[67px] border-b border-[#dfe2e8] text-[#74809c]">
        <button className="-mb-px flex w-[86px] flex-col items-center gap-[5px] border-b-2 border-[#e9602f] pt-[7px] font-medium text-[#e9602f]">
          <Svg w={25} h={26} className="text-[#3a3f4a]">
            <path d="M13 1.500L1.500 12.500 11 23.500l8.500-8M13 1.500l5 6M1 7.500h15" />
            <path d="M20.500 9.500l3.500 2v12.800h-3.500z" stroke="#3f78e0" fill="#b8d0fa" />
          </Svg>
          填充与线条
        </button>
        <button className="flex w-[89px] flex-col items-center gap-[5px] pt-[7px]">
          <Svg w={26} h={26} className="text-[#3a3f4a]">
            <path d="M14 22.300H1.200V2.200h23.600V12" />
            <path d="M20 10.500v8M16 14.500h8M22.500 18.500v5M20 21h5M15.500 17v4M13.500 19h4" stroke="#3f78e0" />
          </Svg>
          效果
        </button>
        <button className="flex w-[87px] flex-col items-center gap-[5px] pt-[7px]">
          <Svg w={26} h={26} className="text-[#222]">
            <path d="M6.500 6.500h18v18h-18z" strokeDasharray="2 1.200" />
            <path d="M6.500 2.200h18M6.500 0v4.500M24.500 0v4.500M2.200 6.500v18M0 6.500h4.500M0 24.500h4.500" stroke="#3f78e0" />
          </Svg>
          大小与属性
        </button>
      </div>

      <div className="flex flex-col pr-[19px] pl-6">
        <div className="mt-5 flex items-center justify-between">
          <SectionTitle text="填充" />
          <Drop label="填充预设" className="h-[31px] w-[137px]" value="无" center />
        </div>
        <RadioList
          name="fill"
          value="无填充"
          items={[["无填充", "N"], ["纯色填充", "S"], ["渐变填充", "G"], ["图片或纹理填充", "P"], ["图案填充", "A"], ["幻灯片背景填充", "B"]]}
        />
        <div className="mt-7 flex items-center justify-between">
          <SectionTitle text="线条" />
          <Drop label="线条预设" className="h-[31px] w-[137px]">
            <span className="ml-[13px] h-1.5 w-[93px] bg-[#bbe0e3]" />
          </Drop>
        </div>
        <RadioList name="line" value="实线" items={[["无线条", "N"], ["实线", "S"], ["渐变线", "G"]]} />
        <hr className="mt-[3px] border-[#f0f1f4]" />

        <div className="mt-[25px] flex items-center">
          <PropLabel id="color" text="颜色" hot="C" />
          <Drop id="color" className="h-[25px] w-[110px]">
            <span className="ml-0.5 h-[19px] w-[90px] bg-[#bbe0e3]" />
          </Drop>
        </div>
        <div className="mt-[15px] flex h-[26px] items-center">
          <PropLabel id="alpha" text="透明度" hot="T" />
          <button aria-label="减少透明度" className="text-[#616b84]">
            <Svg w={19} h={19} sw={1.200}><circle cx="9.500" cy="9.500" r="8.800" /><path d="M6 9.500h7" /></Svg>
          </button>
          <div className="relative mr-1 ml-px flex items-center">
            <output htmlFor="alpha" className="absolute -top-2 left-px leading-none text-[#666]">0%</output>
            <input
              id="alpha"
              type="range"
              defaultValue={0}
              className="h-4 w-[95px] appearance-none bg-[linear-gradient(#b9bcc3,#b9bcc3)] bg-[length:90px_2px] bg-[right_center] bg-no-repeat [&::-webkit-slider-thumb]:mt-2 [&::-webkit-slider-thumb]:h-[9px] [&::-webkit-slider-thumb]:w-[11px] [&::-webkit-slider-thumb]:appearance-none [&::-webkit-slider-thumb]:bg-[#f66e42] [&::-webkit-slider-thumb]:[clip-path:polygon(50%_0,100%_100%,0_100%)]"
            />
          </div>
          <button aria-label="增加透明度" className="text-[#616b84]">
            <Svg w={19} h={19} sw={1.200}><circle cx="9.500" cy="9.500" r="8.800" /><path d="M6 9.500h7M9.500 6v7" /></Svg>
          </button>
        </div>
        <div className="mt-[15px] flex h-[26px] items-center">
          <PropLabel id="width" text="宽度" hot="W" />
          <div className="flex h-[26px] w-[138px] rounded-sm border border-[#c5c9d0] bg-white text-[#6e6e6e]">
            <button aria-label="减小宽度" className="flex w-[29px] items-center justify-center">
              <Svg w={9} h={9} sw={2}><path d="M0 4.500h9" /></Svg>
            </button>
            <input id="width" defaultValue="0.75磅" className="w-20 border-x border-[#d5d8de] pl-[3px] text-[#262d3d] outline-none" />
            <button aria-label="增大宽度" className="flex flex-1 items-center justify-center">
              <Svg w={9} h={9} sw={2}><path d="M0 4.500h9M4.500 0v9" /></Svg>
            </button>
          </div>
        </div>
        <div className="mt-[9px] flex items-center">
          <PropLabel id="compound" text="复合类型" hot="C" />
          <Drop id="compound" className="h-9 w-[137px]">
            <span className="ml-[17px] h-2 w-[92px] bg-black" />
          </Drop>
        </div>
        <div className="mt-2 flex items-center">
          <PropLabel id="dash" text="短划线类型" hot="D" />
          <Drop id="dash" className="h-9 w-[137px]" />
        </div>
        <div className="mt-[10px] flex items-center">
          <PropLabel id="cap" text="端点类型" hot="A" />
          <Drop id="cap" className="h-[25px] w-[110px]" value="平面" />
        </div>
      </div>
    </section>
  );
}

const RAIL: { label: string; icon: ReactNode; active?: boolean }[] = [
  {
    label: "快捷",
    icon: (
      <Svg w={20} h={20} sw={1.300} className="text-[#5b6680]">
        <path d="M6 13.500C4 9 9 1.500 19 1c.5 8-4 14.500-9.500 15.500zM7 6.500C4 6.500 2 8 1 11l4.500-.5M13.500 12.500c.5 3-1 5.500-3.500 7l-.8-3M1 18l4-4M1.500 14l2-2M5 19l2-2" />
        <circle cx="13" cy="7" r="2" />
      </Svg>
    ),
  },
  {
    label: "属性",
    active: true,
    icon: <Svg w={20} h={17} sw={1.500}><circle cx="3.300" cy="3" r="2.400" /><circle cx="14.500" cy="14" r="2.400" /><path d="M6 3h14M0 14h12M17 14h3" /></Svg>,
  },
  {
    label: "动画",
    icon: <Svg w={20} h={20} sw={1.400}><path d="M12 1l2.200 4.800 5.200.6-3.800 3.600 1 5.200L12 12.600 7.400 15.200l1-5.200-3.800-3.600 5.200-.6zM5 9.500l-4.500 4M6 14l-4.500 4.500M11.500 16l-1.800 3M16.500 17l-.8 2" /></Svg>,
  },
  {
    label: "切换",
    icon: <Svg w={20} h={19} sw={1.500}><path d="M7 16.500H.8V1h15M4.500 13V4.800h14.700v12.500H13M6 13.800h5.500M9 11l2.700 2.800L9 16.600" /></Svg>,
  },
  {
    label: "帮助",
    icon: <Svg w={19} h={19} sw={1.400}><circle cx="9.500" cy="9.500" r="8.700" /><path d="M6.500 7.300c0-4 6-4 6 0 0 2.300-3 2.200-3 4.700M9.500 13.500v1.700" /></Svg>,
  },
  {
    label: "稻壳资源",
    icon: (
      <Svg w={20} h={20} sw={1.500}>
        <path d="M7 17.500H2.300V9M1 6.500L3 1.200h13l2.500 5.300c-.3 3-4.500 3-4.700.5M1 6.500c.3 3 4.200 3 4.400.5.300 3 4.200 3 4.500 0" />
        <path d="M14.500 18.500c-1.800-2.500-1.500-6.500.8-8.500 1.500 3 1.300 6-.8 8.500zM14 18.500c-3 .3-4.500-2-4.500-5 2.500.5 4.300 2.300 4.500 5zM15.500 18.500c2.500 0 4-2 4-4.800-2.300.6-3.700 2.300-4 4.800z" />
      </Svg>
    ),
  },
];

function SideRail() {
  return (
    <aside className="flex w-[54px] shrink-0 flex-col items-center pr-0.5">
      <div className="mt-[14px] h-[5px] w-[25px] border-y border-[#c2c7d0]" />
      <div className="mt-[15px] flex flex-col gap-1">
        {RAIL.map((r) => (
          <button key={r.label} aria-label={r.label} className={`flex h-[41px] w-[41px] items-center justify-center rounded-sm ${r.active ? "bg-[#d9dee6]" : ""}`}>
            {r.icon}
          </button>
        ))}
      </div>
      <div className="mt-auto h-px w-[49px] bg-[#dfe2e8]" />
      <button aria-label="更多" className="mt-[26px] mb-5">
        <Svg w={20} h={6} sw={1.600}><circle cx="2.800" cy="3" r="1.900" /><circle cx="10" cy="3" r="1.900" /><circle cx="17.200" cy="3" r="1.900" /></Svg>
      </button>
    </aside>
  );
}

function StatusBar() {
  return (
    <footer className="flex h-[41px] shrink-0 items-center border-t border-[#e0e2e7] pl-[13px] whitespace-nowrap">
      <span>幻灯片 2 / 2</span>
      <Sep className="mx-[13px] h-[18px]" />
      <span>默认设计模板</span>
      <Sep className="ml-3 h-[18px]" />
      <div className="ml-auto flex items-center pr-[21px]">
        <button className="flex items-center gap-[6px] text-[#5b6270]">
          <Svg w={18} h={19} sw={1.300}><path d="M5 3.500l4-2.500 4 2.500M1 5.500v8.500l8 4.500 8-4.500V5.500L9 10zM5 8v4l4 2.500" /></Svg>
          智能美化
          <Caret className="ml-1 rotate-180 text-[#5b6270]" />
        </button>
        <Sep className="ml-[14px] h-[18px]" />
        <button className="ml-[15px] flex items-center gap-0.5">
          <Svg w={20} h={18}><path d="M0 3h9M11 5l4.500-4L20 5M0 10h20M0 16.500h20" /></Svg>
          备注
          <Caret className="ml-1 text-[#74809c]" />
        </button>
        <button className="ml-[10px] flex items-center gap-1">
          <Svg w={20} h={19}><path d="M10 2.500H.8v13.800H4V18l3-1.700h12V9.500M15.500 0v8M11.500 4h8" /></Svg>
          批注
        </button>
        <Sep className="ml-3 h-[18px]" />
        <button aria-label="普通视图" className="ml-[11px] flex h-[30px] w-[29px] items-center justify-center rounded-sm bg-[#d9dee5]">
          <Svg w={20} h={18}><path d="M.8.8h18.400v16.400H.8zM6 1v16M6 12.500h13M3 5h1.500M3 8.500h1.500" /></Svg>
        </button>
        <button aria-label="幻灯片浏览" className="ml-2">
          <Svg w={19} h={18}><path d="M1 1h6v6H1zM12 1h6v6h-6zM1 11h6v6H1zM12 11h6v6h-6z" /></Svg>
        </button>
        <button aria-label="阅读视图" className="ml-3">
          <Svg w={20} h={19}><path d="M10 3.500C8 1 5 1 1 1.500v14.500h6l3 2 3-2h6V1.500C15 1 12 1 10 3.500zM10 3.500V18" /></Svg>
        </button>
        <Sep className="ml-[15px] h-[18px]" />
        <button aria-label="放映" className="ml-[11px] flex h-[30px] w-[39px] items-center justify-center rounded-sm bg-[#707a96]">
          <svg width="11" height="16" viewBox="0 0 11 16"><path d="M0 0h2l9 8-9 8H0z" fill="#fff" /></svg>
        </button>
        <Caret className="ml-[6px] text-[#74809c]" />
        <Sep className="ml-3 h-[18px]" />
        <button aria-label="最佳显示比例" className="ml-[14px]">
          <Svg w={18} h={18}><path d="M4.500.8H.8v4M13.500.8h3.700v4M.8 13.200v4h3.700M17.200 13.200v4h-3.700M5.500 4.500h7v9h-7z" /></Svg>
        </button>
        <button className="ml-[10px] flex items-center gap-1">
          87% <Caret />
        </button>
        <button aria-label="缩小" className="ml-[14px] h-[3px] w-[13px] bg-[#3c4864]" />
        <span className="relative ml-[15px] flex items-center">
          <span className="absolute left-[85px] h-2 w-px bg-[#b9bfcc]" />
          <input
            aria-label="显示比例"
            type="range"
            defaultValue={41}
            className="h-4 w-[172px] appearance-none bg-[linear-gradient(90deg,#3c4864_0_42%,#cdd2dd_42%_100%)] bg-[length:100%_2px] bg-center bg-no-repeat [&::-webkit-slider-thumb]:size-4 [&::-webkit-slider-thumb]:appearance-none [&::-webkit-slider-thumb]:rounded-full [&::-webkit-slider-thumb]:border [&::-webkit-slider-thumb]:border-[#4d4d4d] [&::-webkit-slider-thumb]:bg-[#ececec]"
          />
        </span>
        <button aria-label="放大" className="ml-[15px] text-[#3c4864]">
          <Svg w={13} h={13} sw={2.600}><path d="M6.500 0v13M0 6.500h13" /></Svg>
        </button>
      </div>
    </footer>
  );
}

// input method bar floating above the window
function ImeBar() {
  return (
    <div className="absolute right-10 bottom-[118px] z-20 flex h-8 items-center border border-[#b8cbe6] bg-white pr-[6px] text-[#0070d8]">
      <svg width="40" height="38" viewBox="0 0 40 38" className="-mt-1 -ml-3 shrink-0" aria-hidden="true">
        <path d="M3 5.500L29 .5c1.500-.3 2.600.4 3 2l6.500 24c.4 1.600-.1 2.800-2 3.500L12 37c-1.700.4-2.800-.2-3.300-2L.6 9C.2 7 1 5.900 3 5.500z" fill="#f4571e" />
        <path d="M31 7.500C21 6.500 6 8 5.500 14.500 5 21 22 18 25.500 21c2 2.500-6 5.500-15.500 5l1 5c10 1.500 24-1.500 24.500-9 .3-6.500-17-4.500-20.500-7-2-2.500 9-4 17.500-3z" fill="#fff" />
      </svg>
      <span className="ml-[7px] flex items-center gap-[14px]">
        <Svg w={17} h={18} sw={2.200}><path d="M1.200 4.500h14.600v7.500H1.200zM8.500 0v18" /></Svg>
        <Svg w={14} h={14} sw={1.600}><circle cx="3" cy="3" r="2" /><path d="M9 9a2.200 2.200 0 1 1 4.300.7c-.3 1.800-1.300 3.300-3 4l1-2.600A2.200 2.200 0 0 1 9 9z" fill="currentColor" stroke="none" /></Svg>
        <Svg w={14} h={20} sw={1.900}><rect x="3.800" y="1" width="6.400" height="10" rx="3.200" fill="currentColor" stroke="none" /><path d="M.5 8.500a6.500 6.500 0 0 0 13 0M4.500 18.500h5" /></Svg>
        <Svg w={19} h={16} sw={1.900}><rect x="1" y="1" width="17" height="14" rx="1.500" /><path d="M2 5.500h15M2 10h15M5.500 2v12M9.500 2v8M13.500 2v12" strokeWidth={1} /></Svg>
        <Svg w={17} h={17} sw={2}><rect width="7.500" height="7.500" rx="2" fill="currentColor" stroke="none" /><rect x="10.500" y="1" width="5.500" height="5.500" rx="1.500" /><rect y="9.500" width="7.500" height="7.500" rx="2" fill="currentColor" stroke="none" /><rect x="9.500" y="9.500" width="7.500" height="7.500" rx="2" fill="currentColor" stroke="none" /></Svg>
      </span>
    </div>
  );
}

export default function App() {
  return (
    <div className="relative flex h-screen flex-col overflow-hidden bg-[#f5f7f9] font-['Noto_Sans','Noto_Sans_CJK_SC',sans-serif] text-[15px] leading-5 text-[#262d3d]">
      <TitleBar />
      <MenuBar />
      <Ribbon />
      <div className="flex min-h-0 flex-1">
        <SlidePanel />
        <Canvas />
        <ScrollBar />
        <PropertyPanel />
        <SideRail />
      </div>
      <StatusBar />
      <ImeBar />
      <div className="absolute top-[405px] right-0 flex h-16 w-[11px] flex-col justify-end rounded-full border-2 border-[#808080] bg-white p-px">
        <span className="h-7 rounded-full bg-[#ff7a1f]" />
      </div>
    </div>
  );
}
